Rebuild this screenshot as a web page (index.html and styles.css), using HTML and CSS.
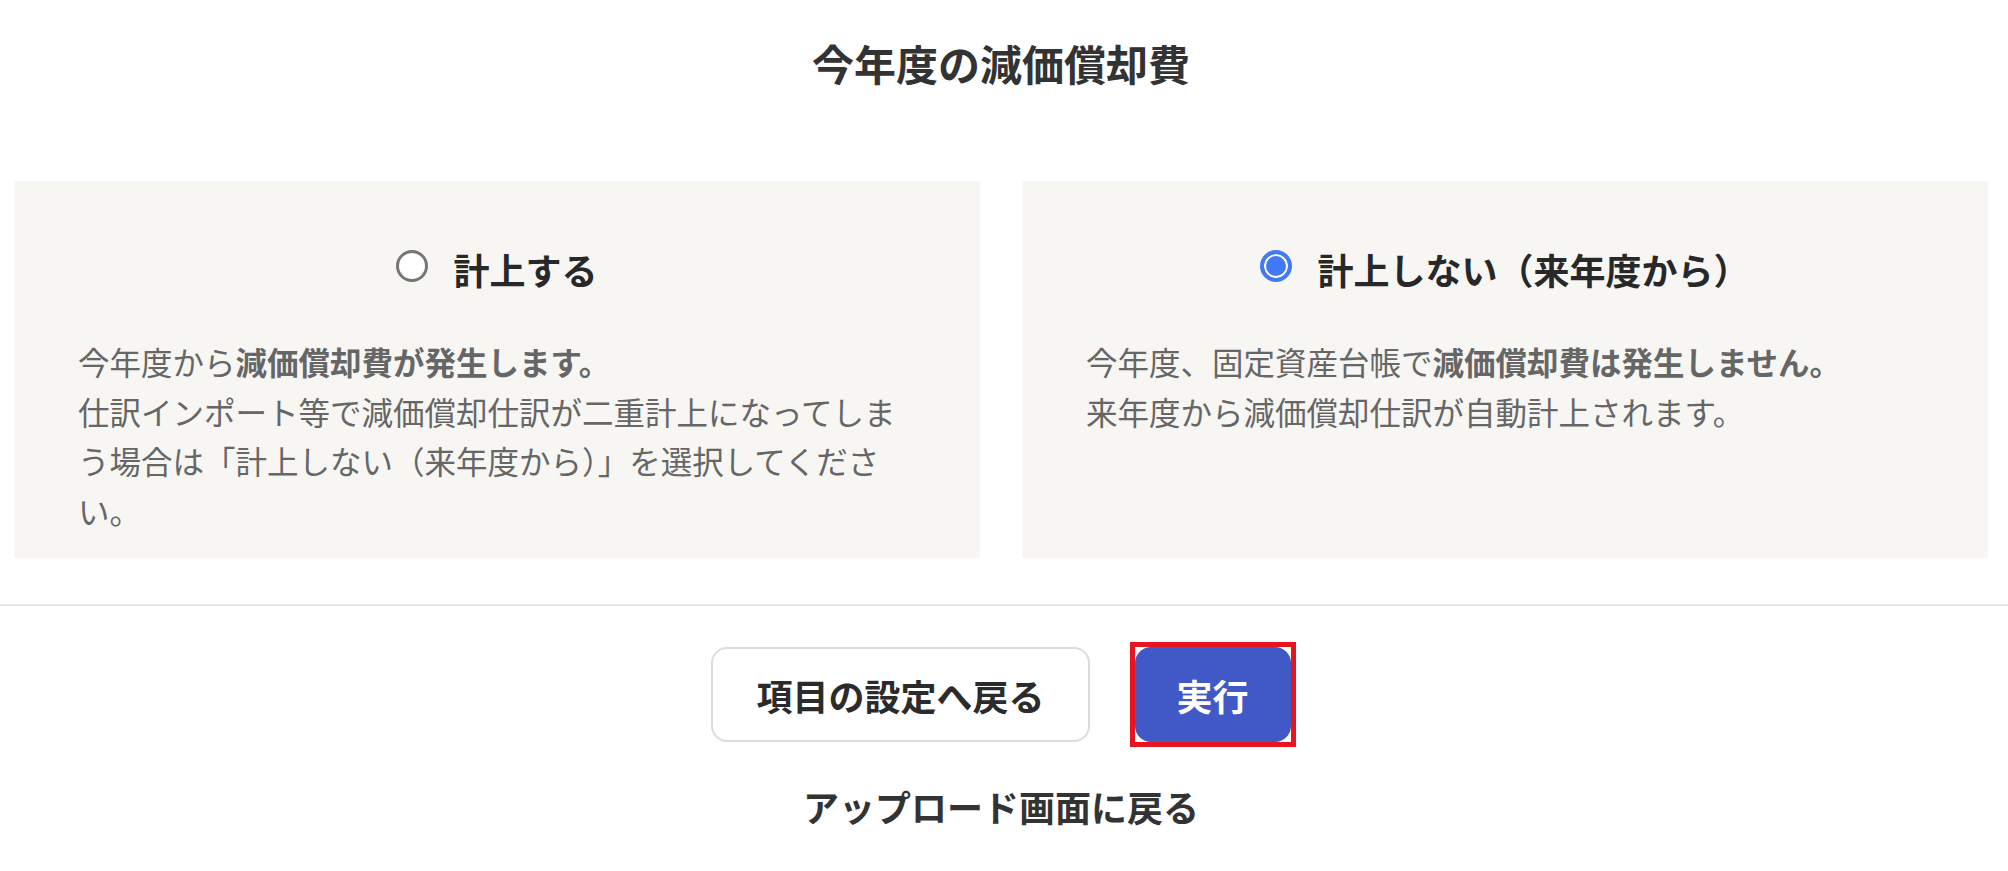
FILE: index.html
```html
<!DOCTYPE html>
<html lang="ja">
<head>
<meta charset="utf-8">
<title>今年度の減価償却費</title>
<link rel="stylesheet" href="styles.css">
</head>
<body>
<section class="main">
  <h1 class="title">今年度の減価償却費</h1>
  <div class="options">
    <label class="option">
      <span class="option-head">
        <input class="radio" type="radio" name="dep" value="yes">
        <span class="option-label">計上する</span>
      </span>
      <span class="option-desc">今年度から<b>減価償却費が発生します。</b><br>仕訳インポート等で減価償却仕訳が二重計上になってしまう場合は「計上しない（来年度から）」を選択してください。</span>
    </label>
    <label class="option">
      <span class="option-head">
        <input class="radio" type="radio" name="dep" value="no" checked>
        <span class="option-label">計上しない（来年度から）</span>
      </span>
      <span class="option-desc">今年度、固定資産台帳で<b>減価償却費は発生しません。</b><br>来年度から減価償却仕訳が自動計上されます。</span>
    </label>
  </div>
</section>
<hr class="divider">
<section class="actions">
  <div class="buttons">
    <button class="btn btn-secondary" type="button">項目の設定へ戻る</button>
    <button class="btn btn-primary" type="button">実行</button>
  </div>
  <a class="back-link" href="#">アップロード画面に戻る</a>
</section>
</body>
</html>
```

FILE: styles.css
```css
* {
  box-sizing: border-box;
}

html, body {
  margin: 0;
  padding: 0;
  background: #ffffff;
}

body {
  font-family: "Noto Sans CJK JP", "Noto Sans", sans-serif;
  color: #333333;
}

.main {
  padding: 31px 20px 0 14px;
}

.title {
  margin: 0;
  text-align: center;
  font-size: 42px;
  line-height: 63px;
  font-weight: 700;
  color: #333333;
}

.options {
  margin-top: 87px;
  display: grid;
  grid-template-columns: 1fr 1fr;
  column-gap: 42px;
}

.option {
  display: flex;
  flex-direction: column;
  background: #f7f6f3;
  padding: 61px 64px 23px 64px;
  cursor: pointer;
}

.option-head {
  display: flex;
  justify-content: center;
  align-items: flex-start;
  gap: 25px;
}

.radio {
  appearance: none;
  -webkit-appearance: none;
  margin: 8px 0 0 0;
  width: 32px;
  height: 32px;
  flex: 0 0 32px;
  border-radius: 50%;
  border: 3px solid #767676;
  background: #ffffff;
}

.radio:checked {
  border: 4px solid #4279f4;
  background: #4279f4;
  box-shadow: inset 0 0 0 2px #ffffff;
}

.option-label {
  font-size: 36px;
  line-height: 54px;
  font-weight: 700;
  color: #282828;
}

.option-desc {
  display: block;
  margin-top: 41px;
  font-size: 31.5px;
  line-height: 49.5px;
  color: #666666;
}

.option-desc b {
  font-weight: 700;
}

.divider {
  margin: 46px 0 0 0;
  border: 0;
  height: 2px;
  background: #e3e6e5;
}

.actions {
  padding: 41px 20px 0 14px;
  display: flex;
  flex-direction: column;
  align-items: center;
}

.buttons {
  display: flex;
  gap: 45px;
}

.btn {
  font-family: inherit;
  font-size: 36px;
  line-height: 54px;
  font-weight: 700;
  height: 95px;
  border-radius: 16px;
  display: flex;
  align-items: center;
  justify-content: center;
  cursor: pointer;
}

.btn-secondary {
  background: #ffffff;
  color: #2b2b2b;
  border: 2px solid #dcdcdc;
  padding: 0 43px;
}

.btn-primary {
  position: relative;
  background: #4059c6;
  color: #ffffff;
  border: 2px solid #4059c6;
  padding: 0 40px;
}

.btn-primary::after {
  content: "";
  position: absolute;
  top: -7px;
  left: -7px;
  right: -7px;
  bottom: -7px;
  border: 5px solid #e8141f;
  pointer-events: none;
}

.back-link {
  margin-top: 37px;
  font-size: 36px;
  line-height: 54px;
  font-weight: 700;
  color: #333333;
  text-decoration: none;
}
```
